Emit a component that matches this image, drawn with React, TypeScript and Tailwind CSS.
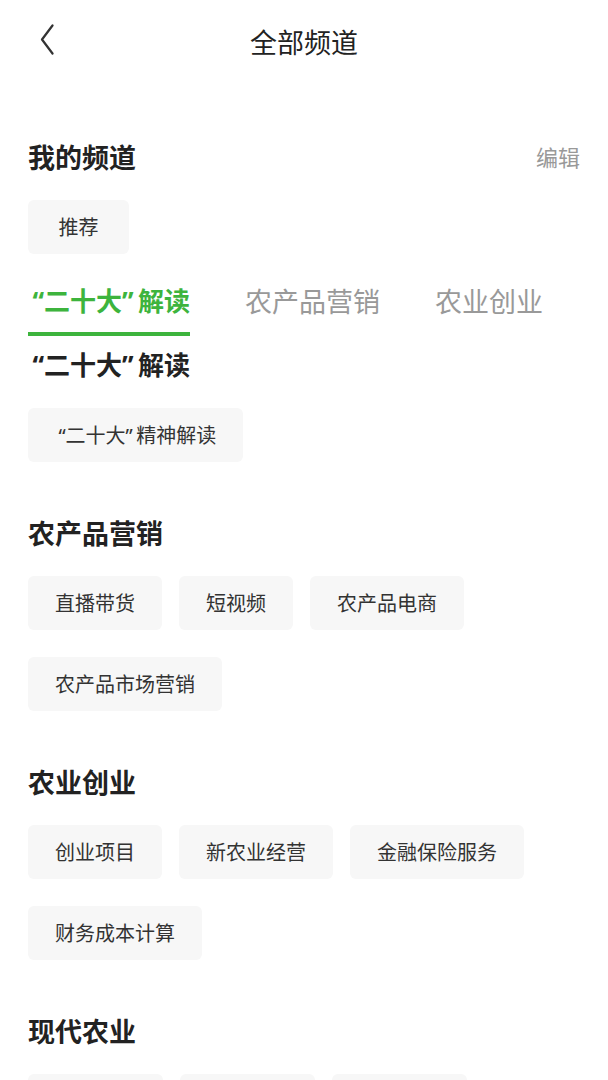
import React from "react";

const FONT = { fontFamily: '"Noto Sans CJK SC", "Noto Sans", sans-serif' };

const sections = [
  { title: "“二十大”解读", items: ["“二十大”精神解读"] },
  { title: "农产品营销", items: ["直播带货", "短视频", "农产品电商", "农产品市场营销"] },
  { title: "农业创业", items: ["创业项目", "新农业经营", "金融保险服务", "财务成本计算"] },
  { title: "现代农业", items: ["", "", ""] },
];

const tabs = ["“二十大”解读", "农产品营销", "农业创业"];

// quotes are proportional in the reference, not full-width
function Q({ text }: { text: string }) {
  const parts = text.split(/([“”])/);
  return (
    <>
      {parts.map((p, i) =>
        p === "“" ? (
          <span key={i} className="font-['Noto_Sans'] ml-[0.17em]">“</span>
        ) : p === "”" ? (
          <span key={i} className="font-['Noto_Sans'] mr-[0.17em]">”</span>
        ) : (
          <React.Fragment key={i}>{p}</React.Fragment>
        )
      )}
    </>
  );
}

function Chip({ label }: { label: string }) {
  return (
    <div className="h-[54px] min-w-[101px] px-[27px] flex items-center justify-center rounded-md bg-[#f7f7f7] text-[20px] text-[#333333] leading-none">
      {label ? <span><Q text={label} /></span> : <span className="w-[81px]" />}
    </div>
  );
}

export default function App() {
  return (
    <div className="w-[608px] h-[1080px] overflow-hidden bg-white" style={FONT}>
      <div className="relative h-[82px] flex items-center justify-center">
        <button className="absolute left-[40px] top-[24px]">
          <svg width="14" height="31" viewBox="0 0 14 31" fill="none">
            <path d="M12.5 1.5L2 15.5L12.5 29.5" stroke="#333333" strokeWidth="2.2" strokeLinecap="round" strokeLinejoin="round" />
          </svg>
        </button>
        <h1 className="text-[27px] text-[#222222] leading-none">全部频道</h1>
      </div>

      <div className="px-[28px]">
        <div className="mt-[56px] h-[36px] flex items-center justify-between">
          <h2 className="text-[27px] font-bold text-[#222222] leading-none">我的频道</h2>
          <span className="text-[22px] text-[#999999] leading-none">编辑</span>
        </div>
        <div className="mt-[26px] flex">
          <Chip label="推荐" />
        </div>

        <div className="mt-[28px] flex gap-[55px]">
          {tabs.map((t, i) => (
            <div key={t} className="flex flex-col">
              <span
                className={
                  i === 0
                    ? "h-[36px] flex items-center text-[26px] font-bold text-[#3db43d] leading-none"
                    : "h-[36px] flex items-center text-[27px] text-[#999999] leading-none"
                }
              >
                <span><Q text={t} /></span>
              </span>
              <div className={i === 0 ? "mt-[14px] h-[4px] bg-[#3db43d]" : "mt-[14px] h-[4px]"} />
            </div>
          ))}
        </div>

        {sections.map((s, idx) => (
          <div key={s.title} className={idx === 0 ? "mt-[10px]" : "mt-[52px]"}>
            <h2 className={idx === 0
              ? "h-[36px] flex items-center text-[26px] font-bold text-[#222222] leading-none"
              : "h-[36px] flex items-center text-[27px] font-bold text-[#222222] leading-none"}>
              <span><Q text={s.title} /></span>
            </h2>
            <div className="mt-[26px] flex flex-wrap gap-x-[17px] gap-y-[27px]">
              {s.items.map((it, j) => (
                <Chip key={it + j} label={it} />
              ))}
            </div>
          </div>
        ))}
      </div>
    </div>
  );
}
